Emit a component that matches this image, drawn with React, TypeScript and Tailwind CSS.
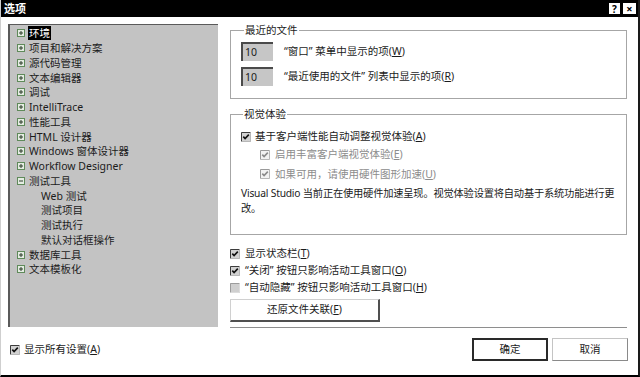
import React from "react";

type Node = { label: string; child?: boolean; open?: boolean; selected?: boolean };

const tree: Node[] = [
  { label: "环境", selected: true },
  { label: "项目和解决方案" },
  { label: "源代码管理" },
  { label: "文本编辑器" },
  { label: "调试" },
  { label: "IntelliTrace" },
  { label: "性能工具" },
  { label: "HTML 设计器" },
  { label: "Windows 窗体设计器" },
  { label: "Workflow Designer" },
  { label: "测试工具", open: true },
  { label: "Web 测试", child: true },
  { label: "测试项目", child: true },
  { label: "测试执行", child: true },
  { label: "默认对话框操作", child: true },
  { label: "数据库工具" },
  { label: "文本模板化" },
];

function Expander({ open }: { open?: boolean }) {
  return (
    <svg width="8" height="8" viewBox="0 0 8 8" className="shrink-0">
      <rect x="0.5" y="0.5" width="7" height="7" fill="#e4ece2" stroke="#5f8a5a" />
      <line x1="2" y1="4" x2="6" y2="4" stroke="#2d3d2b" />
      {!open && <line x1="4" y1="2" x2="4" y2="6" stroke="#2d3d2b" />}
    </svg>
  );
}

function Check({ checked = true, dim = false }: { checked?: boolean; dim?: boolean }) {
  const edge = dim ? "#9a9a9a" : "#3c3c3c";
  const fill = dim ? "#f2f2f2" : "#d2d2d2";
  const mark = dim ? "#8a8a8a" : "#111111";
  return (
    <svg width="10" height="10" viewBox="0 0 10 10" className="shrink-0">
      <rect x="0" y="0" width="10" height="10" fill={checked ? fill : "#cfcfcf"} />
      <path d="M0.5 9.5 V0.5 H9.5" fill="none" stroke={checked ? edge : "#9c9c9c"} />
      <path d="M9.5 0.5 V9.5 H0.5" fill="none" stroke={checked ? "#b8b8b8" : "#dcdcdc"} />
      {checked && <path d="M2.3 4.6 L4.1 6.6 L7.8 2.6" fill="none" stroke={mark} strokeWidth="1.6" />}
    </svg>
  );
}

function NumBox({ value }: { value: string }) {
  return (
    <div className="w-[32px] h-[19px] bg-[#c6c6c6] border-l-2 border-t-2 border-[#4a4a4a] pl-[2px] leading-[16px]">
      {value}
    </div>
  );
}

export default function App() {
  return (
    <div className="w-[640px] h-[377px] flex flex-col bg-white border-l border-[#cfcfcf] border-r-2 border-r-[#1a1a1a] border-b-2 border-b-black text-[10.5px] text-[#1b1b1b] font-['Noto_Sans','Noto_Sans_CJK_SC',sans-serif] overflow-hidden">
      {/* title bar */}
      <div className="h-[17px] bg-black flex items-center pl-[3px] pr-[2px] shrink-0">
        <span className="text-white font-bold text-[11px] leading-none">选项</span>
        <div className="ml-auto flex gap-[3px]">
          <div className="w-[11px] h-[11px] bg-white flex items-center justify-center text-black font-bold text-[10px] leading-none">?</div>
          <div className="w-[13px] h-[11px] bg-white flex items-center justify-center text-black font-bold text-[11px] leading-none">×</div>
        </div>
      </div>

      <div className="flex pl-[7px] pt-[7px]">
        {/* tree */}
        <div className="w-[210px] h-[303px] bg-[#c3c3c3] border-l-2 border-t border-[#5a5a5a] pt-[1px] shrink-0">
          {tree.map((n) => (
            <div key={n.label} className="h-[14.75px] flex items-center">
              {n.child ? (
                <span className="w-[28px] shrink-0" />
              ) : (
                <span className="w-[16px] shrink-0 flex justify-end pr-[1px]">
                  <Expander open={n.open} />
                </span>
              )}
              <span
                className={
                  n.selected
                    ? "ml-[2px] px-[1px] bg-black text-white leading-[14px]"
                    : "ml-[3px] leading-[14px]"
                }
              >
                {n.label}
              </span>
            </div>
          ))}
        </div>

        {/* right column */}
        <div className="ml-[12px] w-[397px] flex flex-col">
          <fieldset className="border border-[#a6a6a6] h-[76px] px-[10px] -mt-[1px]">
            <legend className="ml-[3px] px-[1px] leading-[14px]">最近的文件</legend>
            <div className="flex items-center mt-[5px]">
              <NumBox value="10" />
              <span className="ml-[11px]">“窗口” 菜单中显示的项(<u>W</u>)</span>
            </div>
            <div className="flex items-center mt-[6px]">
              <NumBox value="10" />
              <span className="ml-[11px]">“最近使用的文件” 列表中显示的项(<u>R</u>)</span>
            </div>
          </fieldset>

          <fieldset className="border border-[#a6a6a6] h-[128px] mt-[8px] pl-[10px] pr-[2px]">
            <legend className="ml-[2px] px-[1px] leading-[14px]">视觉体验</legend>
            <div className="flex items-center gap-[4px] mt-[8px]">
              <Check />
              <span>基于客户端性能自动调整视觉体验(<u>A</u>)</span>
            </div>
            <div className="flex items-center gap-[5px] mt-[2px] pl-[19px] text-[#8c8c8c]">
              <Check dim />
              <span>启用丰富客户端视觉体验(<u>E</u>)</span>
            </div>
            <div className="flex items-center gap-[5px] mt-[4px] pl-[19px] text-[#8c8c8c]">
              <Check dim />
              <span>如果可用，请使用硬件图形加速(<u>U</u>)</span>
            </div>
            <p className="mt-[4px] leading-[15px] text-[10.25px] tracking-[-0.2px]">
              Visual Studio 当前正在使用硬件加速呈现。视觉体验设置将自动基于系统功能进行更改。
            </p>
          </fieldset>

          <div className="flex flex-col gap-[3px] mt-[12px]">
            <div className="flex items-center gap-[5px] h-[14px]">
              <Check />
              <span>显示状态栏(<u>T</u>)</span>
            </div>
            <div className="flex items-center gap-[5px] h-[14px]">
              <Check />
              <span>“关闭” 按钮只影响活动工具窗口(<u>O</u>)</span>
            </div>
            <div className="flex items-center gap-[5px] h-[14px]">
              <Check checked={false} />
              <span>“自动隐藏” 按钮只影响活动工具窗口(<u>H</u>)</span>
            </div>
          </div>

          <button className="mt-[4px] w-[150px] h-[23px] bg-white border border-[#d0d0d0] border-r-[#505050] border-b-[#505050] border-r-2 border-b-2 text-center">
            还原文件关联(<u>F</u>)
          </button>

          <div className="mt-[5px] h-px bg-[#8e8e8e]" />
        </div>
      </div>

      {/* bottom bar */}
      <div className="flex items-center pl-[9px] pr-[10px] mt-[10px]">
        <Check />
        <span className="ml-[4px]">显示所有设置(<u>A</u>)</span>
        <button className="ml-auto w-[76px] h-[23px] bg-white border-2 border-[#2a2a2a] text-center">确定</button>
        <button className="ml-[4px] w-[76px] h-[23px] bg-white border border-[#c4c4c4] border-r-[#8a8a8a] border-b-[#8a8a8a] text-center">取消</button>
      </div>
    </div>
  );
}
